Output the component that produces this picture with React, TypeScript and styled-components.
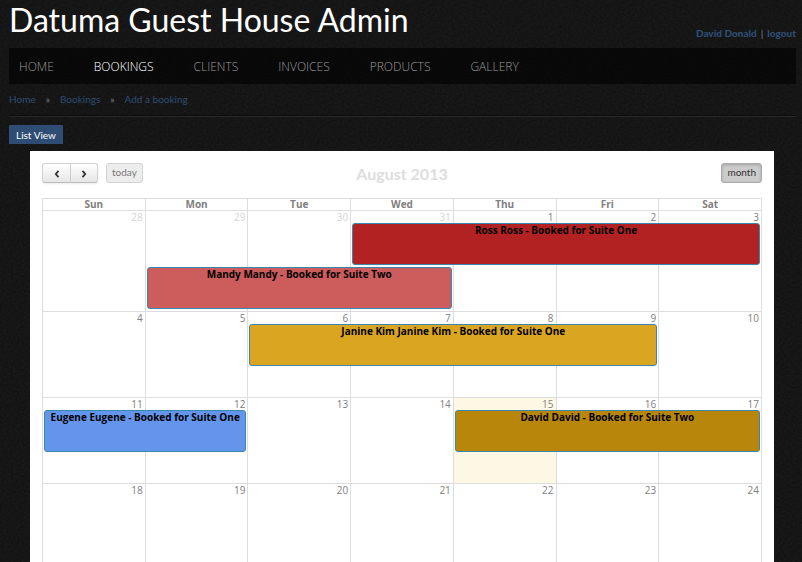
import React from 'react';
import styled, { createGlobalStyle, css } from 'styled-components';

const grain =
  "url(\"data:image/svg+xml,%3Csvg xmlns='http://www.w3.org/2000/svg' width='100' height='100'%3E%3Cfilter id='n' x='0' y='0' width='100%25' height='100%25'%3E%3CfeTurbulence type='fractalNoise' baseFrequency='.45' numOctaves='3' stitchTiles='stitch'/%3E%3CfeColorMatrix values='0 0 0 0 0 0 0 0 0 0 0 0 0 0 0 .4 .4 0 0 -.28'/%3E%3C/filter%3E%3Crect width='100' height='100' filter='url(%23n)'/%3E%3C/svg%3E\")";

const GlobalStyle = createGlobalStyle`
  * { box-sizing: border-box; }
  html, body, #root { height: 100%; }
  body {
    margin: 0;
    overflow-x: hidden;
    background: #191919 ${grain};
    color: #808080;
    font: 10px/14px Lato, 'Open Sans', sans-serif;
  }
  a { color: #2f4d74; text-decoration: none; }
  button { font: inherit; cursor: pointer; }
`;

const Page = styled.div`
  height: 100%;
  overflow: hidden;
  padding: 0 6px 0 9px;
`;

const Header = styled.header`
  display: flex;
  justify-content: space-between;
  align-items: flex-end;
  height: 48px;
  padding-bottom: 8px;
`;

const Title = styled.h1`
  margin: 0;
  align-self: flex-start;
  color: #fff;
  font-size: 32px;
  font-weight: 400;
  line-height: 40px;
`;

const Account = styled.div`
  display: flex;
  gap: 4px;

  a { font-weight: 900; }
`;

const Nav = styled.nav`
  display: flex;
  align-items: center;
  gap: 40px;
  height: 36px;
  padding: 2px 10px 0;
  background: rgba(0, 0, 0, 0.6);
`;

const NavLink = styled.a<{ $active?: boolean }>`
  color: ${(p) => (p.$active ? '#fff' : '#999')};
  font: 300 12px/16px 'Open Sans', sans-serif;
  text-transform: uppercase;
`;

const Breadcrumb = styled.nav`
  display: flex;
  gap: 10px;
  padding: 8px 0 9px;
  border-bottom: 1px solid #0d0d0d;
  box-shadow: 0 1px #292929;
`;

const ListViewButton = styled.button`
  display: block;
  height: 19px;
  margin: 9px 0 7px;
  padding: 0 7px;
  border: 0;
  background: #2f4d74;
  color: #fff;
`;

const Panel = styled.main`
  margin: 0 22px 0 21px;
  padding: 12px 12px 40px;
  background: #fff;
`;

const Toolbar = styled.div`
  display: grid;
  grid-template-columns: 1fr auto 1fr;
  align-items: start;
  height: 35px;
`;

const ToolGroup = styled.div<{ $end?: boolean }>`
  display: flex;
  justify-content: ${(p) => (p.$end ? 'flex-end' : 'flex-start')};
  gap: 8px;
`;

const Month = styled.h2`
  margin: 0;
  color: #ddd;
  font-size: 16px;
  font-weight: 700;
  line-height: 22px;
`;

const Arrows = styled.div`
  display: flex;
`;

const ToolButton = styled.button<{ $look?: 'active' | 'disabled' }>`
  height: 20px;
  padding: 0 5px 2px;
  border: 1px solid #d2d2d2;
  border-bottom-color: #bbb;
  border-radius: 3px;
  background: linear-gradient(#fff, #e6e6e6);
  box-shadow: 0 1px 2px rgba(0, 0, 0, 0.08);
  color: #333;
  line-height: 16px;

  ${(p) =>
    p.$look === 'disabled' &&
    css`
      border-color: #d2d2d2;
      background: #ededed;
      box-shadow: none;
      color: #777;
    `}
  ${(p) =>
    p.$look === 'active' &&
    css`
      border-color: #aaa;
      background: #ccc;
      box-shadow: inset 0 1px 3px rgba(0, 0, 0, 0.2);
    `}
`;

const ArrowButton = styled(ToolButton)`
  display: grid;
  place-items: center;
  width: 28px;
  padding: 2px 0 0;

  &:first-child {
    width: 29px;
    border-radius: 3px 0 0 3px;
  }
  &:last-child {
    width: 27px;
    border-left: 0;
    border-radius: 0 3px 3px 0;
  }
`;

const Calendar = styled.table`
  width: 100%;
  table-layout: fixed;
  border-collapse: separate;
  border-spacing: 0;
  border-right: 1px solid #ddd;
  font-family: 'Open Sans', sans-serif;
`;

const DayName = styled.th`
  height: 12px;
  padding: 0;
  border: solid #ddd;
  border-width: 1px 0 0 1px;
  font-size: 10px;
  line-height: 11px;
`;

const Day = styled.td<{ $tall: boolean; $today: boolean }>`
  position: relative;
  height: ${(p) => (p.$tall ? 101 : 86)}px;
  padding: 0 2px;
  border: solid #ddd;
  border-width: 1px 0 0 1px;
  background: ${(p) => (p.$today ? '#fcf8e3' : 'transparent')};
  text-align: right;
  vertical-align: top;
`;

const DayNumber = styled.time<{ $muted: boolean }>`
  display: block;
  color: ${(p) => (p.$muted ? '#d4d4d4' : '#808080')};
  font-size: 10px;
  line-height: 12px;
`;

const Booking = styled.a<{ $color: string; $span: number; $lane: number }>`
  position: absolute;
  z-index: 1;
  top: ${(p) => 12 + p.$lane * 44}px;
  left: 1px;
  width: calc(${(p) => p.$span * 100}% + ${(p) => p.$span - 3}px);
  height: 42px;
  overflow: hidden;
  border: 1px solid #3a87ad;
  border-radius: 3px;
  background: ${(p) => p.$color};
  color: #000;
  font-size: 10px;
  font-weight: 700;
  line-height: 12px;
  text-align: center;
  white-space: nowrap;
`;

type BookingData = { title: string; color: string; span: number; lane?: number };

const bookings: Record<string, BookingData> = {
  '2013-07-31': { title: 'Ross Ross - Booked for Suite One', color: '#b22222', span: 4 },
  '2013-07-29': { title: 'Mandy Mandy - Booked for Suite Two', color: '#cd5c5c', span: 3, lane: 1 },
  '2013-08-06': { title: 'Janine Kim Janine Kim - Booked for Suite One', color: '#daa520', span: 4 },
  '2013-08-11': { title: 'Eugene Eugene - Booked for Suite One', color: '#6495ed', span: 2 },
  '2013-08-15': { title: 'David David - Booked for Suite Two', color: '#b8860b', span: 3 },
};

const today = '2013-08-15';
const dayNames = ['Sun', 'Mon', 'Tue', 'Wed', 'Thu', 'Fri', 'Sat'];

const weeks = Array.from({ length: 4 }, (_, week) =>
  dayNames.map((_, day) => new Date(Date.UTC(2013, 6, 28 + week * 7 + day)).toISOString().slice(0, 10)),
);

const navItems = ['Home', 'Bookings', 'Clients', 'Invoices', 'Products', 'Gallery'];

function Chevron({ back }: { back?: boolean }) {
  return (
    <svg width="6" height="8" viewBox="0 0 6 8" aria-hidden="true">
      <path d={back ? 'M4.5 .8 1.8 4l2.7 3.2' : 'M1.5 .8 4.2 4 1.5 7.2'} fill="none" stroke="#333" strokeWidth="1.8" />
    </svg>
  );
}

export default function App() {
  return (
    <>
      <GlobalStyle />
      <Page>
        <Header>
          <Title>Datuma Guest House Admin</Title>
          <Account>
            <a href="#profile">David Donald</a>
            <span>|</span>
            <a href="#logout">logout</a>
          </Account>
        </Header>
        <Nav aria-label="Main">
          {navItems.map((item) => (
            <NavLink key={item} href={`#${item.toLowerCase()}`} $active={item === 'Bookings'}>
              {item}
            </NavLink>
          ))}
        </Nav>
        <Breadcrumb aria-label="Breadcrumb">
          <a href="#home">Home</a>
          <span>»</span>
          <a href="#bookings">Bookings</a>
          <span>»</span>
          <a href="#add">Add a booking</a>
        </Breadcrumb>
        <ListViewButton type="button">List View</ListViewButton>
        <Panel>
          <Toolbar>
            <ToolGroup>
              <Arrows>
                <ArrowButton type="button" aria-label="Previous month">
                  <Chevron back />
                </ArrowButton>
                <ArrowButton type="button" aria-label="Next month">
                  <Chevron />
                </ArrowButton>
              </Arrows>
              <ToolButton type="button" $look="disabled">today</ToolButton>
            </ToolGroup>
            <Month>August 2013</Month>
            <ToolGroup $end>
              <ToolButton type="button" $look="active">month</ToolButton>
            </ToolGroup>
          </Toolbar>
          <Calendar>
            <thead>
              <tr>
                {dayNames.map((name) => (
                  <DayName key={name} scope="col">{name}</DayName>
                ))}
              </tr>
            </thead>
            <tbody>
              {weeks.map((week, index) => (
                <tr key={week[0]}>
                  {week.map((date) => {
                    const booking = bookings[date];
                    return (
                      <Day key={date} $tall={index === 0} $today={date === today}>
                        <DayNumber dateTime={date} $muted={!date.startsWith('2013-08')}>
                          {Number(date.slice(8))}
                        </DayNumber>
                        {booking && (
                          <Booking
                            href={`#booking-${date}`}
                            $color={booking.color}
                            $span={booking.span}
                            $lane={booking.lane ?? 0}
                          >
                            {booking.title}
                          </Booking>
                        )}
                      </Day>
                    );
                  })}
                </tr>
              ))}
            </tbody>
          </Calendar>
        </Panel>
      </Page>
    </>
  );
}
